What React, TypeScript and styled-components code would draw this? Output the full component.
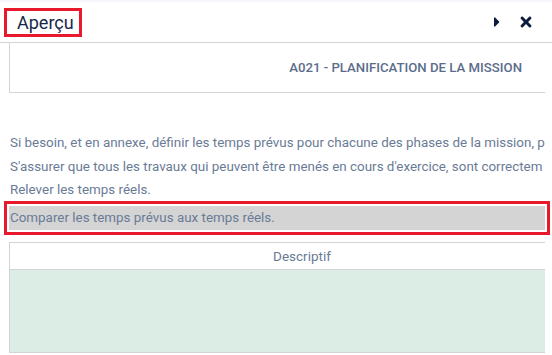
import React from 'react';
import styled, { createGlobalStyle } from 'styled-components';
import { FaCaretRight, FaTimes } from 'react-icons/fa';

const GlobalStyle = createGlobalStyle`
  html, body {
    margin: 0;
    padding: 0;
    background: #f5f6fa;
    font-family: Roboto, 'Liberation Sans', sans-serif;
  }
`;

const steps = [
  'Si besoin, et en annexe, définir les temps prévus pour chacune des phases de la mission, p',
  "S'assurer que tous les travaux qui peuvent être menés en cours d'exercice, sont correctem",
  'Relever les temps réels.',
  'Comparer les temps prévus aux temps réels.',
];

const App = () => {
  return (
    <>
      <GlobalStyle />
      <Panel>
        <Header>
          <Title>Aperçu</Title>
          <Actions>
            <IconButton aria-label="suivant">
              <FaCaretRight size={16} />
            </IconButton>
            <IconButton aria-label="fermer">
              <FaTimes size={16} />
            </IconButton>
          </Actions>
        </Header>
        <Body>
          <Reference>A021 - PLANIFICATION DE LA MISSION</Reference>
          <Steps>
            {steps.map((step, i) => (
              <Step key={i} selected={i === steps.length - 1}>
                {step}
              </Step>
            ))}
          </Steps>
          <TableScroll>
            <Table>
              <TableHead>Descriptif</TableHead>
              <TableCell />
            </Table>
          </TableScroll>
        </Body>
      </Panel>
    </>
  );
};

export default App;

const Panel = styled.div`
  margin-top: 2px;
  height: 353px;
  background: #fff;
  overflow: hidden;
`;

const Header = styled.div`
  height: 40px;
  display: flex;
  align-items: center;
  justify-content: space-between;
  border-bottom: 1px solid #d4d4d4;
  padding: 0 18px 0 7px;
`;

const Title = styled.h1`
  margin: 0;
  height: 23px;
  width: 72px;
  box-sizing: border-box;
  padding-left: 10px;
  display: flex;
  align-items: center;
  font-size: 18px;
  font-weight: 400;
  color: #16284a;
  outline: 3px solid #e8192c;
`;

const Actions = styled.div`
  display: flex;
  align-items: center;
  gap: 13px;
`;

const IconButton = styled.button`
  border: none;
  background: none;
  padding: 0;
  display: flex;
  align-items: center;
  color: #0b1d3c;
  cursor: pointer;
`;

const Body = styled.div`
  padding: 0 7px 0 9px;
`;

const Reference = styled.div`
  height: 49px;
  display: flex;
  align-items: center;
  justify-content: flex-end;
  padding-right: 23px;
  border-left: 1px solid #d4d4d4;
  border-bottom: 1px solid #d4d4d4;
  font-size: 13.2px;
  font-weight: 500;
  color: #5b6d8b;
`;

const Steps = styled.ul`
  list-style: none;
  margin: 38px 0 0;
  padding: 0;
`;

const Step = styled.li<{ selected?: boolean }>`
  height: ${(p) => (p.selected ? '24px' : '23.5px')};
  margin-top: ${(p) => (p.selected ? '4px' : '0')};
  padding-left: 1px;
  display: flex;
  align-items: center;
  white-space: nowrap;
  overflow: hidden;
  font-size: 13.4px;
  color: #6a7b96;
  background: ${(p) => (p.selected ? '#d4d4d4' : 'transparent')};
  outline: ${(p) => (p.selected ? '3px solid #e8192c' : 'none')};
  outline-offset: ${(p) => (p.selected ? '2px' : '0')};
`;

const TableScroll = styled.div`
  margin-top: 12px;
  overflow: hidden;
`;

const Table = styled.div`
  width: 586px;
  box-sizing: border-box;
  border: 1px solid #d4d4d4;
`;

const TableHead = styled.div`
  height: 26px;
  display: flex;
  align-items: center;
  justify-content: center;
  border-bottom: 1px solid #d4d4d4;
  font-size: 13.5px;
  color: #6a7b96;
`;

const TableCell = styled.div`
  height: 82px;
  background: #dcede6;
`;
